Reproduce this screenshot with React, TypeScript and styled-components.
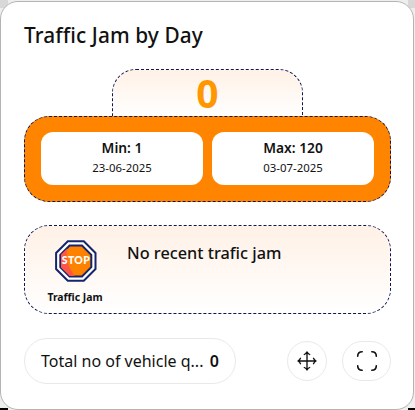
import React from "react";
import styled, { createGlobalStyle } from "styled-components";

const GlobalStyle = createGlobalStyle`
  * { box-sizing: border-box; }
  body { margin: 0; background: #eee; font-family: "Noto Sans", "Open Sans", sans-serif; color: #111; }
`;

const Page = styled.div`
  height: 410px;
  padding: 1px 1px 0 0;
  background:
    linear-gradient(#000, #000) 0 408px / 8px 2px no-repeat,
    linear-gradient(#000, #000) 408px 408px / 7px 2px no-repeat,
    linear-gradient(#d8d8d8, #d8d8d8) 0 0 / 8px 8px no-repeat,
    linear-gradient(#d8d8d8, #d8d8d8) 408px 0 / 7px 8px no-repeat,
    #eee;
`;

const Card = styled.main`
  height: 409px;
  padding: 20px 22px 0 23px;
  background: #fff;
  border: 1px solid #b4b4b4;
  border-radius: 18px;
  display: flex;
  flex-direction: column;
`;

const Text = styled.span<{ $size: number; $weight?: number; $line: number }>`
  display: block;
  font-size: ${(p) => p.$size}px;
  font-weight: ${(p) => p.$weight ?? 400};
  line-height: ${(p) => p.$line}px;
  white-space: nowrap;
`;

const Title = styled.h1`
  margin: 0;
  font-size: 20.8px;
  font-weight: 500;
  line-height: 26px;
  letter-spacing: 0.1px;
`;

const Counter = styled.div`
  width: 191px;
  height: 47px;
  margin: 21px 0 0 88px;
  border: 1px dashed #0b1658;
  border-bottom: 0;
  border-radius: 24px 24px 0 0;
  background: linear-gradient(#fff1e6, #fff);
  color: #ff9800;
  text-align: center;
  font-size: 39px;
  font-weight: 700;
  line-height: 46px;
`;

const Range = styled.section`
  height: 86px;
  padding: 15px 16px 16px;
  display: flex;
  gap: 9px;
  background: #ff8500;
  border: 1px dashed #0b1658;
  border-radius: 25px;
`;

const RangeBox = styled.div`
  flex: 1;
  padding-top: 6px;
  border-radius: 12px;
  background: #fff;
  text-align: center;
`;

const Recent = styled.section`
  height: 89px;
  margin-top: 23px;
  padding: 14px 22px 0;
  display: flex;
  gap: 24px;
  border: 1px dashed #0b1658;
  border-radius: 25px;
  background: linear-gradient(#fff1e6, #fff);
`;

const Badge = styled.div`
  width: 56px;
  display: flex;
  flex-direction: column;
  align-items: center;
  gap: 8px;
`;

const Footer = styled.footer`
  height: 46px;
  margin-top: 24px;
  display: flex;
  align-items: center;
`;

const Total = styled.div`
  width: 212px;
  height: 46px;
  padding: 0 16px;
  display: flex;
  align-items: center;
  justify-content: space-between;
  border: 1px solid #e9e9e9;
  border-radius: 23px;
`;

const RoundButton = styled.button<{ $width: number; $left: number }>`
  width: ${(p) => p.$width}px;
  height: 40px;
  margin: 0 0 0 ${(p) => p.$left}px;
  padding: 0;
  display: grid;
  place-items: center;
  border: 1px solid #e9e9e9;
  border-radius: 20px;
  background: #fff;
`;

const StopSign = () => (
  <svg width="42" height="42" viewBox="-0.8 0 42 42" overflow="visible">
    <defs>
      <clipPath id="face"><path d="M14.8 6h12.4L36 14.8v12.4L27.2 36H14.8L6 27.2V14.8z" /></clipPath>
    </defs>
    <path d="M13 1.3h16L40.7 13v16L29 40.7H13L1.3 29V13z" fill="#fff" stroke="#14256c" strokeWidth="2" />
    <path d="M14.8 5.5h12.4l9.3 9.3v12.4l-9.3 9.3H14.8l-9.3-9.3V14.8z" fill="#ff8100" stroke="#14256c" strokeWidth="2" />
    <path clipPath="url(#face)" d="M6 6h6.5c-2 11 1 22 7.5 30H6z" fill="#ff5547" />
    <text x="21" y="24" textAnchor="middle" textLength="28" fill="#fff" fontFamily="Lato, sans-serif" fontWeight="900" fontSize="10.5">STOP</text>
  </svg>
);

const MoveIcon = () => (
  <svg width="20" height="20" viewBox="0 0 20 20" fill="none" stroke="#111" strokeWidth="1.35" strokeLinecap="round" strokeLinejoin="round">
    <path d="M10 1v18M1 10h18M7.3 3.5Q9 2.8 10 1q1 1.8 2.7 2.5M7.3 16.5Q9 17.2 10 19q1-1.8 2.7-2.5M3.5 7.3Q2.8 9 1 10q1.8 1 2.5 2.7M16.5 7.3Q17.2 9 19 10q-1.8 1-2.5 2.7" />
  </svg>
);

const ExpandIcon = () => (
  <svg width="22" height="22" viewBox="0 0 22 22" fill="none" stroke="#111" strokeWidth="1.6" strokeLinecap="round">
    <path d="M1.7 6.2c0-3 1.5-4.5 4.5-4.5M15.8 1.7c3 0 4.5 1.5 4.5 4.5M1.7 15.8c0 3 1.5 4.5 4.5 4.5M15.8 20.3c3 0 4.5-1.5 4.5-4.5" />
  </svg>
);

const ranges = [
  { label: "Min: 1", date: "23-06-2025" },
  { label: "Max: 120", date: "03-07-2025" },
];

export default function App() {
  return (
    <Page>
      <GlobalStyle />
      <Card>
        <Title>Traffic Jam by Day</Title>
        <Counter>0</Counter>
        <Range>
          {ranges.map((r) => (
            <RangeBox key={r.label}>
              <Text $size={13.8} $weight={600} $line={20}>{r.label}</Text>
              <Text $size={11.4} $line={20}>{r.date}</Text>
            </RangeBox>
          ))}
        </Range>
        <Recent>
          <Badge>
            <StopSign />
            <Text $size={10.4} $weight={700} $line={14}>Traffic Jam</Text>
          </Badge>
          <Text $size={16.3} $weight={500} $line={26}>No recent trafic jam</Text>
        </Recent>
        <Footer>
          <Total>
            <Text $size={16} $line={22}>Total no of vehicle q...</Text>
            <Text $size={16} $weight={600} $line={22}>0</Text>
          </Total>
          <RoundButton $width={40} $left={51} aria-label="Move"><MoveIcon /></RoundButton>
          <RoundButton $width={49} $left={15} aria-label="Expand"><ExpandIcon /></RoundButton>
        </Footer>
      </Card>
    </Page>
  );
}
